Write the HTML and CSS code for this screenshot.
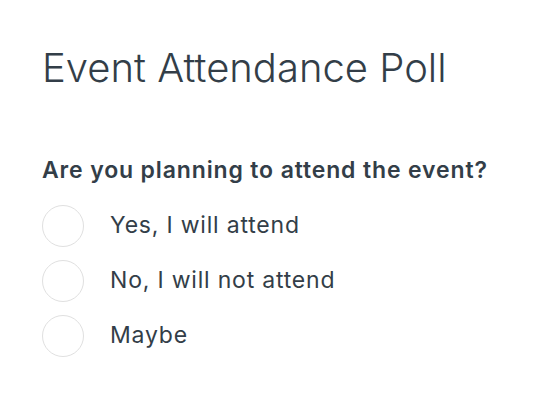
FILE: index.html
```html
<!DOCTYPE html>
<html lang="en">
<head>
  <meta charset="UTF-8" />
  <meta name="viewport" content="width=device-width, initial-scale=1" />
  <title>Event Attendance Poll</title>
  <link rel="stylesheet" href="styles.css">
</head>
<body>

<main class="poll">
  <h1 class="poll-title">Event Attendance Poll</h1>

  <form class="poll-form">
    <p class="poll-question">Are you planning to attend the event?</p>

    <div class="poll-options">
      <label class="poll-option">
        <input type="radio" name="attend" value="yes" />
        <span>Yes, I will attend</span>
      </label>
      <label class="poll-option">
        <input type="radio" name="attend" value="no" />
        <span>No, I will not attend</span>
      </label>
      <label class="poll-option">
        <input type="radio" name="attend" value="maybe" />
        <span>Maybe</span>
      </label>
    </div>
  </form>
</main>

</body>
</html>
```
FILE: styles.css
```css
body {
  margin: 0;
  background: #fff;
  color: #333e48;
  font-family: Inter, 'Noto Sans', sans-serif;
}
.poll {
  padding: 44px 0 0 42px;
}
.poll-title {
  margin: 0 0 64px;
  font-size: 40px;
  line-height: 48px;
  font-weight: 300;
  letter-spacing: 0;
}
.poll-form {
  margin: 0;
}
.poll-question {
  margin: 0 0 21px;
  font-size: 23px;
  line-height: 28px;
  font-weight: 600;
  letter-spacing: 0.86px;
}
.poll-options {
  display: flex;
  flex-direction: column;
  gap: 13px;
}
.poll-option {
  display: flex;
  align-items: center;
  gap: 26px;
  font-size: 23px;
  line-height: 28px;
  letter-spacing: 0.8px;
  cursor: pointer;
}
.poll-option span {
  margin-top: -3px;
}
.poll-option input {
  appearance: none;
  -webkit-appearance: none;
  box-sizing: border-box;
  width: 42px;
  height: 42px;
  margin: 0;
  border: 1.5px solid #e0e0e0;
  border-radius: 50%;
  background: #fff;
  cursor: pointer;
}
.poll-option input:checked {
  border: 6px solid #333e48;
}
```
